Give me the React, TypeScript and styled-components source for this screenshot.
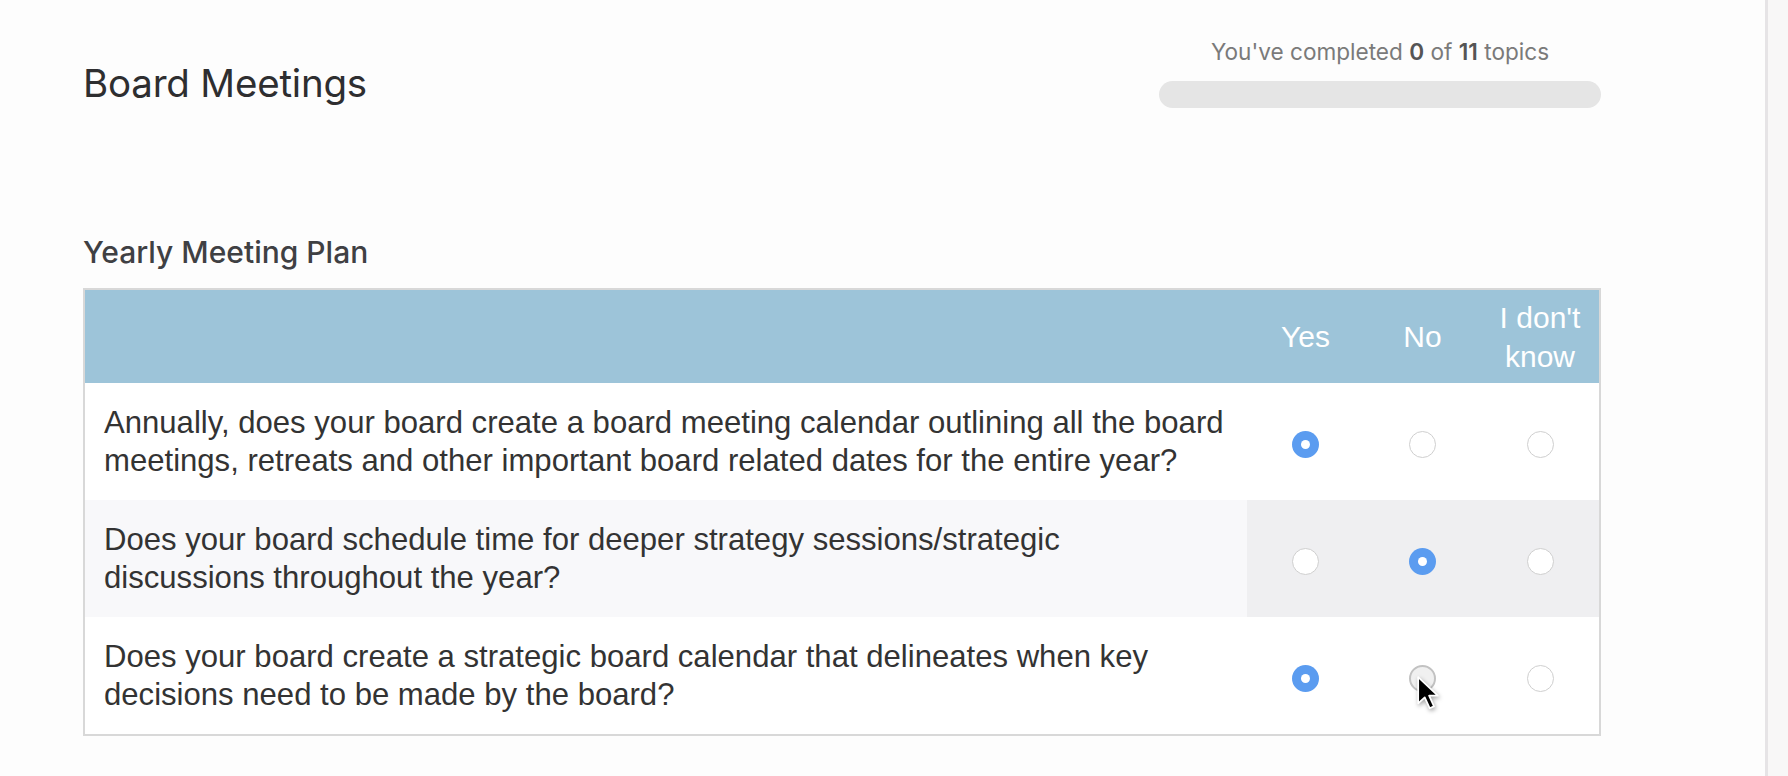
import React from "react";
import styled, { createGlobalStyle } from "styled-components";

const GlobalStyle = createGlobalStyle`
  html, body { margin: 0; padding: 0; }
  body { background: #fdfdfd; font-family: "Liberation Sans", Arial, sans-serif; }
`;

const Shell = styled.div`
  display: flex;
  width: 1788px;
  height: 776px;
  overflow: hidden;
`;

const Main = styled.main`
  flex: 0 0 1765px;
  box-sizing: border-box;
  padding: 38px 164px 0 83px;
  background: #fdfdfd;
`;

const SideStrip = styled.aside`
  flex: 1;
  border-left: 3px solid #e6e4e6;
  background: #f8f7f7;
`;

const HeaderRow = styled.header`
  display: flex;
  justify-content: space-between;
  align-items: flex-start;
`;

const Title = styled.h1`
  margin: 23px 0 0 0;
  font-family: Inter, "Open Sans", sans-serif;
  font-weight: 400;
  font-size: 38.5px;
  line-height: 44px;
  letter-spacing: -0.2px;
  color: #2e2e30;
`;

const Progress = styled.div`
  width: 442px;
  display: flex;
  flex-direction: column;
  align-items: center;
  gap: 15px;
`;

const ProgressText = styled.div`
  font-family: Inter, "Open Sans", sans-serif;
  font-size: 22.6px;
  line-height: 28px;
  color: #7a7a7a;
  b { font-weight: 600; color: #555; }
`;

const Track = styled.div`
  width: 100%;
  height: 27px;
  border-radius: 14px;
  background: #e5e5e5;
`;

const SectionTitle = styled.h2`
  margin: 127px 0 19px 0;
  font-family: Inter, "Open Sans", sans-serif;
  font-weight: 500;
  font-size: 30px;
  line-height: 34px;
  color: #3f4043;
`;

const Table = styled.div`
  border: 2px solid #d8d8d8;
  display: grid;
  grid-template-columns: 1fr 117px 117px 118px;
`;

const HeadCell = styled.div`
  height: 93px;
  background: #9dc4d9;
  color: #ffffff;
  font-size: 30px;
  line-height: 39px;
  display: flex;
  align-items: center;
  justify-content: center;
  text-align: center;
`;

const QuestionCell = styled.div<{ $shade: boolean }>`
  height: 117px;
  box-sizing: border-box;
  padding: 0 10px 0 19px;
  display: flex;
  flex-direction: column;
  justify-content: center;
  background: ${(p) => (p.$shade ? "#f8f8fa" : "#ffffff")};
  color: #333333;
  font-size: 31.1px;
  line-height: 38px;
`;

const Line = styled.span`
  display: block;
  white-space: nowrap;
`;

const ChoiceCell = styled.div<{ $shade: boolean }>`
  position: relative;
  height: 117px;
  box-sizing: border-box;
  padding-top: 5px;
  display: flex;
  align-items: center;
  justify-content: center;
  background: ${(p) => (p.$shade ? "#efeff1" : "#ffffff")};
`;

const Radio = styled.span<{ $checked: boolean; $hover?: boolean }>`
  width: 27px;
  height: 27px;
  box-sizing: border-box;
  border-radius: 50%;
  display: flex;
  align-items: center;
  justify-content: center;
  border: ${(p) =>
    p.$checked ? "none" : p.$hover ? "2px solid #c2c2c2" : "1.5px solid #cfcfcf"};
  background: ${(p) => (p.$checked ? "#5b9cf0" : p.$hover ? "#f0f0f0" : "#ffffff")};
  &::after {
    content: "";
    display: ${(p) => (p.$checked ? "block" : "none")};
    width: 9px;
    height: 9px;
    border-radius: 50%;
    background: #ffffff;
  }
`;

const Cursor = styled.svg`
  position: absolute;
  left: 52px;
  top: 59px;
  filter: drop-shadow(1px 2px 2px rgba(0, 0, 0, 0.35));
`;

type Row = { lines: string[]; answer: number; hover?: number };

const rows: Row[] = [
  {
    lines: [
      "Annually, does your board create a board meeting calendar outlining all the board",
      "meetings, retreats and other important board related dates for the entire year?",
    ],
    answer: 0,
  },
  {
    lines: [
      "Does your board schedule time for deeper strategy sessions/strategic",
      "discussions throughout the year?",
    ],
    answer: 1,
  },
  {
    lines: [
      "Does your board create a strategic board calendar that delineates when key",
      "decisions need to be made by the board?",
    ],
    answer: 0,
    hover: 1,
  },
];

export default function App() {
  return (
    <>
      <GlobalStyle />
      <Shell>
        <Main>
          <HeaderRow>
            <Title>Board Meetings</Title>
            <Progress>
              <ProgressText>
                You've completed <b>0</b> of <b>11</b> topics
              </ProgressText>
              <Track />
            </Progress>
          </HeaderRow>
          <SectionTitle>Yearly Meeting Plan</SectionTitle>
          <Table>
            <HeadCell />
            <HeadCell>Yes</HeadCell>
            <HeadCell>No</HeadCell>
            <HeadCell>
              I don't
              <br />
              know
            </HeadCell>
            {rows.map((r, i) => {
              const shade = i === 1;
              return (
                <React.Fragment key={i}>
                  <QuestionCell $shade={shade}>
                    {r.lines.map((l, k) => (
                      <Line key={k}>{l}</Line>
                    ))}
                  </QuestionCell>
                  {[0, 1, 2].map((c) => (
                    <ChoiceCell key={c} $shade={shade}>
                      <Radio $checked={r.answer === c} $hover={r.hover === c} />
                      {r.hover === c && (
                        <Cursor width="24" height="35" viewBox="0 0 22 32">
                          <path
                            d="M2 1 L2 25 L8 19.5 L12.5 29.5 L16.5 27.8 L12 18 L20 18 Z"
                            fill="#000"
                            stroke="#fff"
                            strokeWidth="1.6"
                            strokeLinejoin="round"
                          />
                        </Cursor>
                      )}
                    </ChoiceCell>
                  ))}
                </React.Fragment>
              );
            })}
          </Table>
        </Main>
        <SideStrip />
      </Shell>
    </>
  );
}
